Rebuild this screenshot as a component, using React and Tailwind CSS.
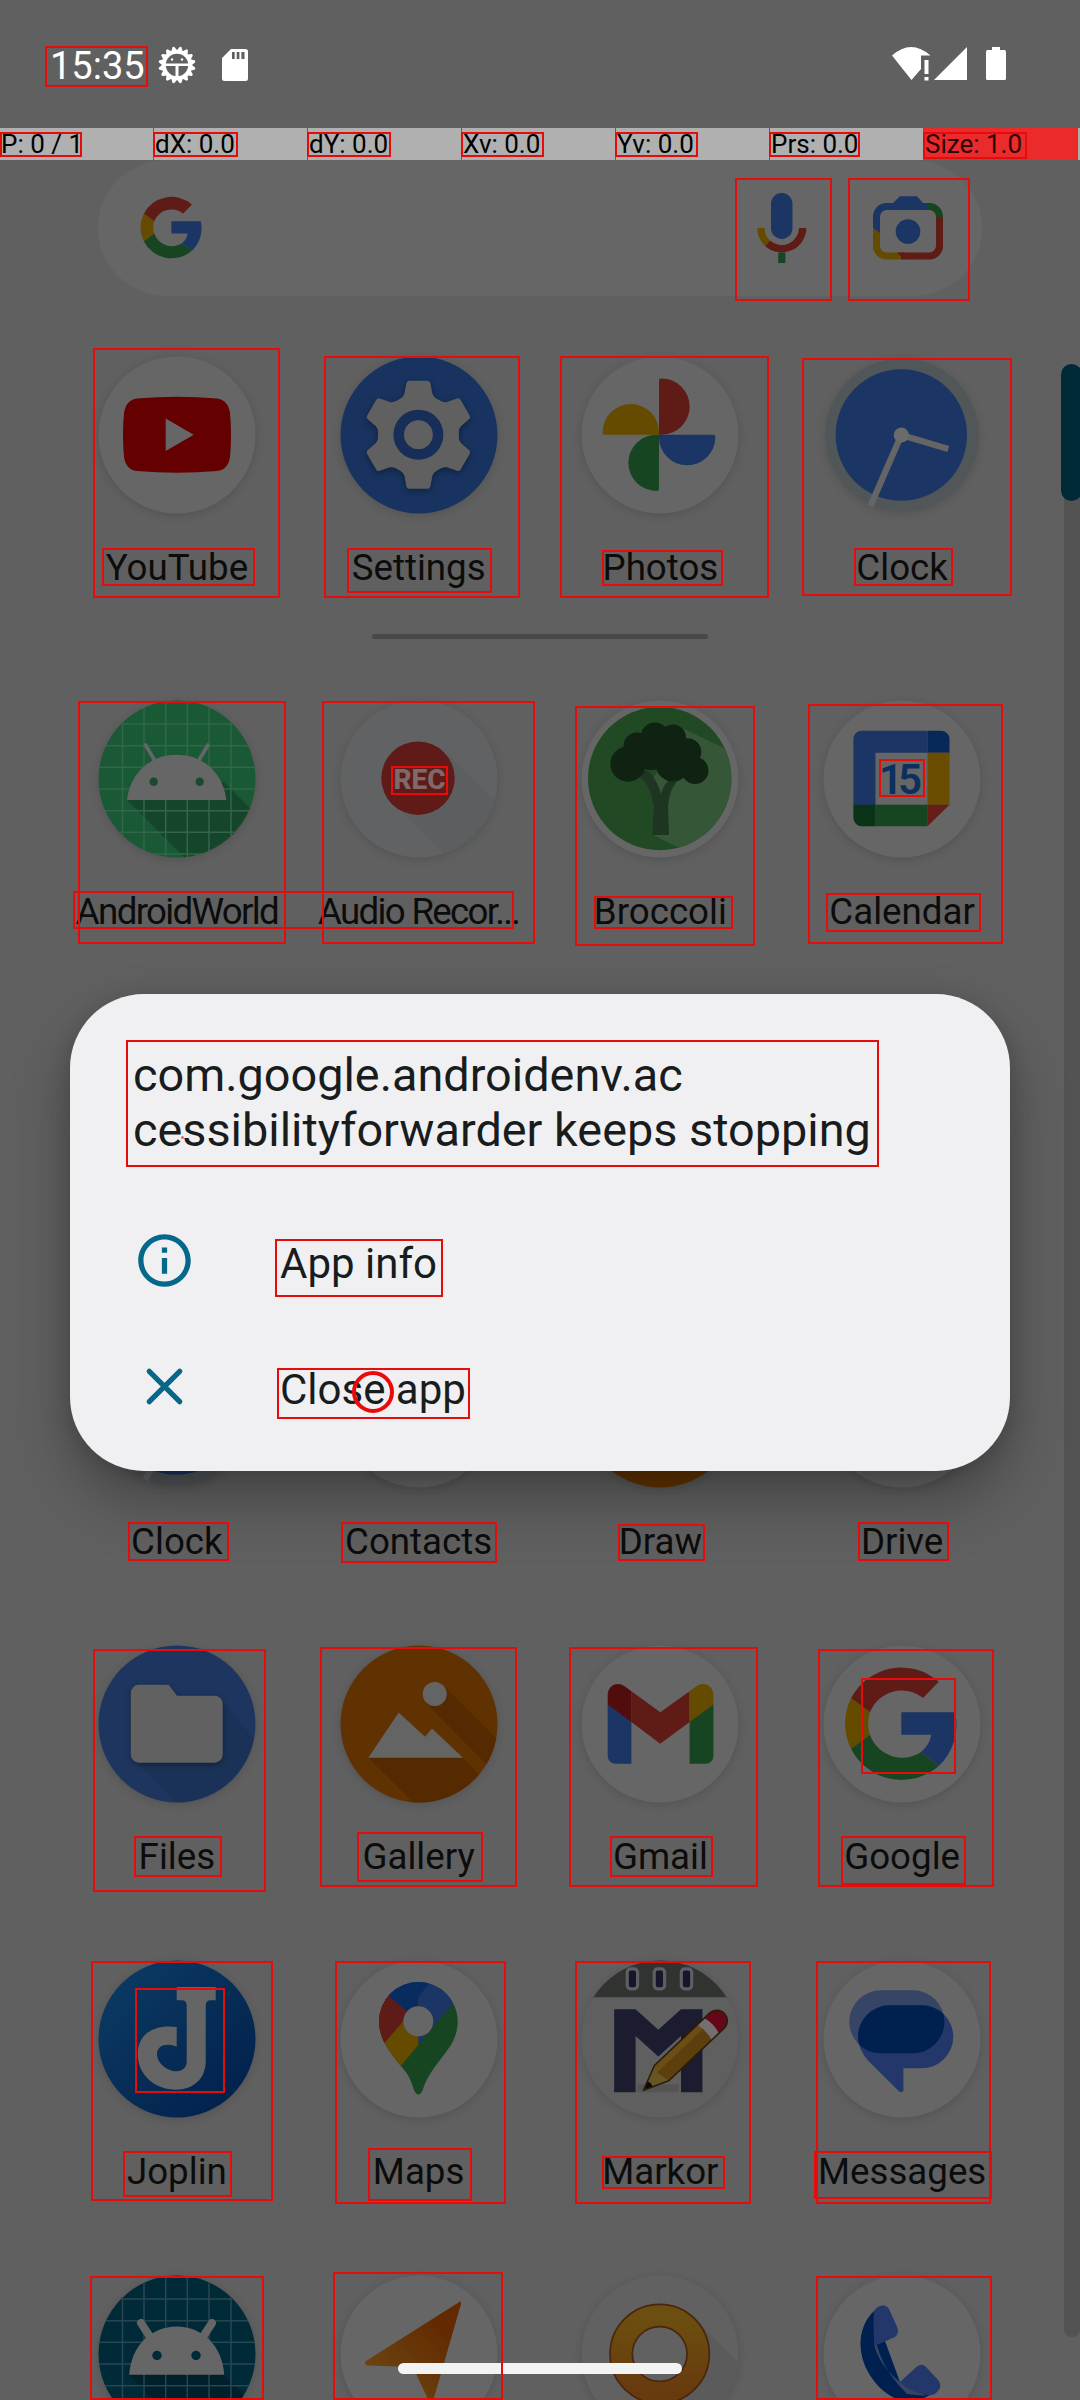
import React from "react";

const RED = "#5f1b16";
const YELLOW = "#654b00";
const GREEN = "#174521";
const BLUE = "#1b3564";
const PAPER = "#666666";

/* ---------- launcher icons (158x158 canvas, origin in the middle) ---------- */

function Disc({ fill = PAPER, r = 78.5, children }) {
  return (
    <svg viewBox="-79 -79 158 158" className="h-[158px] w-[158px] overflow-visible">
      <circle r={r} fill={fill} className="drop-shadow-[0_2px_4px_rgba(0,0,0,0.14)]" />
      {children}
    </svg>
  );
}

function GoogleMark() {
  return (
    <g>
      <path fill={RED} d="M-51-25.7A56.7 56.7 0 0 1 36.8-42.3L21-26A34 34 0 0 0-32-11.7Z" />
      <path fill={YELLOW} d="M-51-25.7L-32-11.7A34 34 0 0 0-32 10.7L-51 24.7A56.7 56.7 0 0 1-51-25.7Z" />
      <path fill={GREEN} d="M-51 24.7L-32 10.7A34 34 0 0 0 19 28L36.8 42A56.7 56.7 0 0 1-51 24.7Z" />
      <path fill={BLUE} d="M-.7-11.7H53A56.7 56.7 0 0 1 36.8 42L19 28A28 28 0 0 0 29.3 10.7H-.7Z" />
    </g>
  );
}

function YouTube() {
  return (
    <Disc>
      <path fill="#640000" d="M-40-36.5Q0-40 40-36.5Q51-35 53-22Q55 0 53 22Q51 35 40 36Q0 39.500-40 36Q-51 35-53 22Q-55 0-53-22Q-51-35-40-36.500Z" />
      <path fill={PAPER} d="M-11.300-16.500L16.700-.3L-11.300 15.900Z" />
    </Disc>
  );
}

function Settings() {
  return (
    <Disc fill="#18335f">
      <g transform="translate(-.6 -.3)">
        <g fill="#606060" className="drop-shadow-[0_2px_3px_rgba(0,0,0,0.35)]">
          <circle r="39.500" />
          {[0, 60, 120, 180, 240, 300].map((a) => (
            <path
              key={a}
              transform={`rotate(${a})`}
              d="M-9-54H9Q11.500-54 12-51.500L14-41Q15-38 18-36L26-31.500L0 0L-26-31.500L-18-36Q-15-38-14-41L-12-51.500Q-11.500-54-9-54Z"
            />
          ))}
        </g>
        <circle r="25" fill="#172e58" />
        <circle r="14.400" fill="#606060" />
      </g>
    </Disc>
  );
}

function Photos() {
  return (
    <Disc>
      <g transform="translate(-1 -.3)">
        {[[RED, 0], [BLUE, 90], [GREEN, 180], [YELLOW, 270]].map(([c, a]) => (
          <path key={a} fill={c} transform={`rotate(${a})`} d="M0 0V-54a2.300 2.300 0 0 1 2.500-2.300A28.150 28.150 0 0 1 2.500 0Z" />
        ))}
      </g>
    </Disc>
  );
}

function Clock() {
  return (
    <Disc fill="#515659" r={76.5}>
      <circle cx="-.7" r="65.700" fill={BLUE} />
      <g stroke="#656565" strokeWidth="6.300">
        <path d="M-.7 0L46.300 13.900M-.7 0L-31.500 71" />
      </g>
      <circle cx="-.7" r="7.600" fill="#6b6b6b" />
    </Disc>
  );
}

function Grid({ stroke }) {
  return (
    <path
      stroke={stroke}
      strokeWidth="1.500"
      d="M-54.500-57V57M-33-71V71M-11.300-78V78M10.300-78V78M32-72V72M54-57V57M-56-55H56M-71-33.300H71M-78-11.700H78M-78 10H78M-72 31.700H72M-57 53.300H57M-24 75H24"
    />
  );
}

function AndroidWorld() {
  return (
    <Disc fill="#1a5936">
      <clipPath id="aw"><circle r="78.500" /></clipPath>
      <path clipPath="url(#aw)" fill="#123a24" opacity=".6" d="M-50 21L10 81H80V36L47 3Z" />
      <Grid stroke="#33664a" />
      <path fill="#666" d="M-50 21C-46.500-8-25-24.300-.3-24.300S46-8 49.300 21Z" />
      <path stroke="#666" strokeWidth="3.600" strokeLinecap="round" d="M-31.500-34L-22-18M31-34L21.500-18" />
      <circle cx="-23.300" cy="2.700" r="4.200" fill="#1a4a30" />
      <circle cx="22.700" cy="2.700" r="4.200" fill="#1a4a30" />
    </Disc>
  );
}

function AudioRecorder() {
  return (
    <Disc fill="#606264">
      <clipPath id="ar"><circle r="78.500" /></clipPath>
      <path clipPath="url(#ar)" fill="#5c5f60" d="M-25 25L30 80H80V26L28-26Z" />
      <circle cx="-1" cy="-.8" r="36.700" fill="#601a17" />
      <text x="0.500" y="10" textAnchor="middle" textLength="52" fill="#7d6a69" className="font-[Roboto] text-[28px] font-extrabold">REC</text>
    </Disc>
  );
}

function Broccoli() {
  return (
    <Disc>
      <clipPath id="br"><circle cx="-.3" cy="-.5" r="71.700" /></clipPath>
      <circle cx="-.3" cy="-.5" r="71.700" fill="#214a24" />
      <path clipPath="url(#br)" fill="#365638" d="M22-51L64-31H80V80H42L-7 56V0Z" />
      <path fill="#1e3521" d="M-24-6L-14-9L-10-6Q-3 1 1 15Q4 5 10 0L21-2Q9 9 8 27L9 56H-7.500L-6.500 27Q-8 10-20-3Z" />
      <g fill="#102312">
        <circle cx="-32" cy="-15" r="17.700" />
        <circle cx="-23" cy="-33" r="13.500" />
        <circle cx="-5" cy="-42.500" r="14" />
        <circle cx="13" cy="-41.500" r="13" />
        <circle cx="27.500" cy="-27" r="13.800" />
        <circle cx="35" cy="-8.500" r="13.500" />
        <circle cx="13" cy="-15" r="17.500" />
        <circle cx="-9" cy="-26" r="17" />
      </g>
    </Disc>
  );
}

function Calendar() {
  return (
    <Disc>
      <path fill={BLUE} d="M-48.600 26V-40a8.500 8.500 0 0 1 8.500-8.300H25.500V-26.300H-26.500V26Z" />
      <path fill="#08285a" d="M25.500-48.300H39a8.500 8.500 0 0 1 8.500 8.300V-26.300H25.500Z" />
      <path fill="#6a4d00" d="M25.500-26.300h22v52h-22Z" />
      <path fill={GREEN} d="M-26.500 25.700h52v21.600h-52Z" />
      <path fill="#0a3216" d="M-48.600 25.700h22.100v21.600H-40a8.500 8.500 0 0 1-8.600-8.300Z" />
      <path fill="#651d18" d="M25.500 25.700h22L25.500 47.300Z" />
      <text x="-1.500" y="14.500" textAnchor="middle" textLength="43" fill="#0e2f5e" className="font-[Roboto] text-[42px] font-semibold">15</text>
    </Disc>
  );
}

function Plain() {
  return <Disc />;
}

function Draw() {
  return <Disc fill="#613300" />;
}

function Files() {
  return (
    <Disc fill="#1e365f">
      <clipPath id="fi"><circle r="78.500" /></clipPath>
      <path clipPath="url(#fi)" fill="#000" opacity=".07" d="M-43 36L2 81H80V18L43-26Z" />
      <path
        fill="#616161"
        className="drop-shadow-[0_2px_3px_rgba(0,0,0,0.35)]"
        d="M-38-39.300H-8.300L0-28.300H37.500a8.200 8.200 0 0 1 8.200 8.200V30.500a8.200 8.200 0 0 1-8.200 8.200H-38a8.200 8.200 0 0 1-8.200-8.200V-31a8.200 8.200 0 0 1 8.200-8.300Z"
      />
    </Disc>
  );
}

function Gallery() {
  return (
    <Disc fill="#603101">
      <clipPath id="ga"><circle r="78.500" /></clipPath>
      <g clipPath="url(#ga)" fill="#552a00">
        <path d="M-50.700 33.700L-4 80H80V70L44 33.700ZM25-38L80 17V47H74L7-21Z" />
      </g>
      <circle cx="15.700" cy="-30" r="12" fill="#646464" />
      <path fill="#646464" d="M-50.700 33.700L-20.300-11.500L6 12.700L13 4.500L44 33.700Z" />
    </Disc>
  );
}

function Gmail() {
  return (
    <Disc>
      <path fill={BLUE} d="M-52.300-20L-28.600-3V39.700H-44.500a7.800 7.800 0 0 1-7.800-7.800Z" />
      <path fill={GREEN} d="M53.400-20L29.600-3V39.700H45.600a7.800 7.800 0 0 0 7.800-7.800Z" />
      <path fill={RED} d="M-28.600-32.700L.3-11.700L29.600-32.700V-2L.3 19.700L-28.600-2Z" />
      <path fill="#500d0c" d="M-52.300-19.500V-29C-52.300-38-43-43.500-35-37.500L-28.600-32.700V-2Z" />
      <path fill={YELLOW} d="M53.400-19.500V-29C53.400-38 44-43.500 36-37.500L29.600-32.700V-2Z" />
    </Disc>
  );
}

function Google() {
  return (
    <Disc>
      <GoogleMark />
    </Disc>
  );
}

function Joplin() {
  return (
    <Disc fill="url(#jo)">
      <defs>
        <linearGradient id="jo" x1="0" y1="0" x2="1" y2="1">
          <stop offset=".1" stopColor="#0b3a62" />
          <stop offset=".9" stopColor="#02214c" />
        </linearGradient>
      </defs>
      <path
        fill="#656565"
        d="M-.3-52H38.700V-38.700H34q-5.300 0-5.300 5.300V22C28.700 40 16 50.700-1 50.700C-22 50.700-39.300 36-39.300 15C-39.300-5-23-15-.3-12V7.700C-10 3.500-20 6-20 15C-20 24-10 32.300-.5 32.300C6 32.300 9.700 28 9.700 22V-33.400q0-5.300-5.300-5.300H-.3Z"
      />
    </Disc>
  );
}

function Maps() {
  return (
    <Disc>
      <clipPath id="ma">
        <path d="M-40-17.700A39.350 39.350 0 0 1 38.700-17.700C38.700-2 31 8 24 17C14 30 8 38 3.700 51Q-.7 60-5 51C-9 38-12 34-18 27C-30 12-40 0-40-17.700Z" />
      </clipPath>
      <g clipPath="url(#ma)">
        <path fill={GREEN} d="M-60-60H60V60H-60Z" />
        <path fill={BLUE} d="M-60-60H55L-.7 5Z" />
        <path fill={YELLOW} d="M-36 .3L-.7-40V6L-17.300 26L-30 40L-60 28Z" />
        <path fill={RED} d="M-60-68L-9-25.500L-38 8H-60Z" />
        <path fill="#0a2b60" d="M-60-68L-12.700-28.300L-.7-18L-.7-42L10.300-55.700V-70H-38Z" />
      </g>
      <circle cx="-.7" cy="-17.700" r="15" fill={PAPER} />
    </Disc>
  );
}

function Markor() {
  return (
    <Disc fill="#5f5f5f">
      <path fill="#303330" d="M-66.500-41.700A78.500 78.500 0 0 1 66.500-41.700Z" />
      {[-27.6, -0.6, 26.5].map((x) => (
        <rect key={x} x={x - 5.2} y="-70.200" width="10.400" height="20" rx="3.500" fill="#15162a" stroke="#5e5e63" strokeWidth="3.200" />
      ))}
      <path fill="#545454" d="M-22.500 45.300H18.600V53.300H-22.500Z" />
      <path fill="#1b1c2f" d="M-45.800-29.700H-24.400L-1.700-9.300L21-29.700H42.400V53.300H21V-3L-1.700 17.500L-24.400-3V53.300H-45.800Z" />
      <g transform="translate(-16.500 51.300) rotate(-43.500)">
        <path fill="#685524" d="M0 0L25-10.500V10.500Z" />
        <path fill="#6d4d16" d="M25-10.500H88V-3H22Z" />
        <path fill="#5c3f0c" d="M22-3.500H88V10.500H25Z" />
        <path fill="#747071" d="M84-10.500H94Q97 0 94 10.500H84Q87 0 84-10.500Z" />
        <path fill="#650719" d="M94-10.500H101A10.500 10.500 0 0 1 101 10.500H94Q97 0 94-10.500Z" />
        <path fill="#0b0905" d="M0 0L9-4Q11 0 9 4Z" />
        <path fill="none" stroke="#2b1c08" strokeWidth="1.600" strokeLinejoin="round" d="M0 0L25-10.500H101A10.500 10.500 0 0 1 101 10.500H25Z" />
      </g>
    </Disc>
  );
}

function Messages() {
  const back = "M-21.200-48.700H10.900a31.500 31.500 0 0 1 0 63H-21.200a31.500 31.500 0 0 1 0-63Z";
  const front = "M-12.500-33.700H19.800a31.500 31.500 0 0 1 0 63H1.400V51.500Q.5 54-2.800 52.500L-34 21.500Q-44 10-44-2.200A31.500 31.500 0 0 1-12.500-33.700Z";
  return (
    <Disc>
      <clipPath id="me"><path d={back} /></clipPath>
      <path fill="#364466" d={back} />
      <path fill="#23376a" d={front} />
      <path fill="#00204f" clipPath="url(#me)" d={front} />
    </Disc>
  );
}

function AndroidBlue() {
  return (
    <Disc fill="#002a38">
      <clipPath id="ab"><circle r="78.500" /></clipPath>
      <path clipPath="url(#ab)" fill="#001c27" d="M-48 20.800L10 80H80V54L47 20.800Z" opacity=".7" />
      <Grid stroke="#284650" />
      <path fill="#666" d="M-47.800 20.800C-46-8-26-27.500-.3-27.500S45.500-8 47.200 20.800Z" />
      <path stroke="#666" strokeWidth="8" strokeLinecap="round" d="M-36-31L-23-11M35-31L22-11" />
      <circle cx="-20" cy="1.500" r="4.700" fill="#002a38" />
      <circle cx="19" cy="1.500" r="4.700" fill="#002a38" />
    </Disc>
  );
}

function Arrow() {
  return (
    <Disc>
      <defs>
        <linearGradient id="na" x1="0" y1="1" x2="1" y2="0">
          <stop offset=".2" stopColor="#6b4310" />
          <stop offset=".8" stopColor="#632900" />
        </linearGradient>
      </defs>
      <path fill="url(#na)" d="M39.500-51.500Q42-54 42-50L14.500 45.500Q12 50 9 45.500L-6 13L-51.500 11.500Q-56 10-53 7Z" />
    </Disc>
  );
}

function Ring() {
  return (
    <Disc fill="#616161">
      <clipPath id="ri"><circle r="78.500" /></clipPath>
      <path clipPath="url(#ri)" fill="#5b5b5b" d="M35-35L80 10V80H30L-35 35Z" />
      <defs>
        <linearGradient id="rg" x1="0" y1="0" x2="0" y2="1">
          <stop offset="0" stopColor="#6c4f10" />
          <stop offset="1" stopColor="#683a0e" />
        </linearGradient>
      </defs>
      <circle r="27.500" fill="#616161" />
      <circle cx="-.3" r="38.500" fill="none" stroke="#4a260c" strokeWidth="24" />
      <circle cx="-.3" r="38.500" fill="none" stroke="url(#rg)" strokeWidth="20.500" />
    </Disc>
  );
}

function Phone() {
  return (
    <Disc>
      <path fill="#00204f" d="M-28-43C-46-26-46 4-28 27C-14 45 4 51 20 45L30 40L-2 28Z" />
      <path fill="#364466" d="M-28-43Q-32 4 5 40L24 42L-2 28Q-22 12-27.600-8Z" />
      <path fill="#23376a" d="M-28-43Q-24-49-18-48.500Q-14-48-12.500-44L-4.500-26Q-3-20-7-17L-27.600-8Q-29-26-28-43Z" />
      <path fill="#23376a" d="M-2 28L15 12.500Q20 9 24 13L37 27Q40 33 36 37Q33 41 27 41.500Q11 40-2 28Z" />
    </Disc>
  );
}

/* ---------- launcher ---------- */

const LABEL = "mt-[32px] h-[43px] font-[Roboto] text-[36.7px] leading-[43px] whitespace-nowrap text-[#0c0c0c]";

function LauncherApp({ icon: Icon, name, tight }) {
  return (
    <div className="flex h-[315px] flex-col items-center">
      <Icon />
      <span className={tight ? `${LABEL} tracking-[-1.7px]` : LABEL}>{name}</span>
    </div>
  );
}

function AppGrid({ apps, className }) {
  return (
    <div className={`ml-[56px] grid w-[967px] grid-cols-4 ${className}`}>
      {apps.map((a, i) => (
        <LauncherApp key={i} {...a} />
      ))}
    </div>
  );
}

const FAVORITES = [
  { icon: YouTube, name: "YouTube" },
  { icon: Settings, name: "Settings" },
  { icon: Photos, name: "Photos" },
  { icon: Clock, name: "Clock" },
];

const TOP_APPS = [
  { icon: AndroidWorld, name: "AndroidWorld", tight: true },
  { icon: AudioRecorder, name: "Audio Recor...", tight: true },
  { icon: Broccoli, name: "Broccoli" },
  { icon: Calendar, name: "Calendar" },
];

const MORE_APPS = [
  { icon: Clock, name: "Clock" },
  { icon: Plain, name: "Contacts" },
  { icon: Draw, name: "Draw" },
  { icon: Plain, name: "Drive" },
  { icon: Files, name: "Files" },
  { icon: Gallery, name: "Gallery" },
  { icon: Gmail, name: "Gmail" },
  { icon: Google, name: "Google" },
  { icon: Joplin, name: "Joplin" },
  { icon: Maps, name: "Maps" },
  { icon: Markor, name: "Markor" },
  { icon: Messages, name: "Messages" },
  { icon: AndroidBlue, name: "" },
  { icon: Arrow, name: "" },
  { icon: Ring, name: "" },
  { icon: Phone, name: "" },
];

/* ---------- system chrome ---------- */

function StatusBar() {
  return (
    <div className="flex h-[128px] shrink-0 items-start text-white">
      <span className="mt-[43px] ml-[50px] w-[108px] font-[Roboto] text-[38px] leading-[46px]">15:35</span>
      <svg viewBox="-19 -19 38 38" className="mt-[46px] h-[38px] w-[38px]">
        {Array.from({ length: 16 }, (_, i) => (
          <path key={i} transform={`rotate(${i * 22.5 + 11.25})`} fill="#fff" d="M-3.300-14L-.8-18.500H.8L3.300-14Z" />
        ))}
        <circle r="13" fill="none" stroke="#fff" strokeWidth="3.600" />
        <path fill="#fff" d="M-13-1.500H13V1H1.500V14H-1.500V1H-13Z" />
        <circle cx="-5" cy="-5.500" r="1.200" fill="#fff" />
        <circle cx="5" cy="-5.500" r="1.200" fill="#fff" />
      </svg>
      <svg viewBox="0 0 26 32" className="mt-[49px] ml-[26px] h-[32px] w-[26px]">
        <path fill="#fff" fillRule="evenodd" d="M9 0H23.500Q26 0 26 2.500V29.500Q26 32 23.500 32H2.500Q0 32 0 29.500V9ZM10 3V10H12.700V3ZM14.700 3V10H17.400V3ZM19.400 3V10H22.500V3Z" />
      </svg>
      <svg viewBox="0 0 76 34" className="mt-[47px] ml-[644px] h-[34px] w-[76px]">
        <path fill="#fff" d="M0 8.500Q19-8.500 38.500 8.500H29V22L19.500 33Z" />
        <path fill="#fff" d="M32.500 13H36.500V27H32.500ZM32.500 30H36.500V33.500H32.500Z" />
        <path fill="#fff" d="M42 33L75 0V33Z" />
      </svg>
      <svg viewBox="0 0 20 34" className="mt-[47px] ml-[18px] h-[34px] w-[20px]">
        <path fill="#fff" d="M6 0H14V3H18.500Q20 3 20 5V31.500Q20 33 18.500 33H1.500Q0 33 0 31.500V5Q0 3 1.500 3H6Z" />
      </svg>
    </div>
  );
}

function PointerBar() {
  const cells = ["P: 0 / 1", "dX: 0.0", "dY: 0.0", "Xv: 0.0", "Yv: 0.0", "Prs: 0.0"];
  const text = "h-[32px] w-[153px] shrink-0 pl-px font-[Roboto] text-[26px] leading-[33px] whitespace-pre";
  return (
    <div className="flex h-[32px] shrink-0 gap-px overflow-hidden">
      {cells.map((c) => (
        <span key={c} className={`${text} bg-[#b0b0b0] text-black`}>{c}</span>
      ))}
      <span className={`${text} bg-[#eb2b2b] text-[#2a0505]`}>Size: 1.0</span>
      <span className="h-[32px] flex-1 bg-[#b0b0b0]" />
    </div>
  );
}

function SearchBar() {
  return (
    <div className="ml-[98px] flex h-[136px] w-[884px] shrink-0 items-center rounded-full bg-[#666666]">
      <svg viewBox="-58 -58 116 116" className="ml-[42px] h-[63.500px] w-[63.500px]">
        <GoogleMark />
      </svg>
      <svg viewBox="0 0 50 72" className="ml-[553.500px] h-[72px] w-[50px]">
        <rect x="14" y="1" width="21.500" height="46" rx="10.700" fill={BLUE} />
        <path fill="none" stroke={RED} strokeWidth="7.300" d="M45.700 36A21 21 0 0 1 10.500 51.200" />
        <path fill="none" stroke={YELLOW} strokeWidth="7.300" d="M3.900 36A21 21 0 0 0 10.500 51.200" />
        <path fill={GREEN} d="M21.200 60.500h7.200V71h-7.200Z" />
      </svg>
      <svg viewBox="0 0 70 64" className="ml-[66px] h-[64px] w-[70px]">
        <g fill="none" strokeWidth="7">
          <path stroke={BLUE} d="M3.500 34V20.500a10 10 0 0 1 10-10H55" />
          <path stroke={GREEN} d="M54 10.500H56.500a10 10 0 0 1 10 10V24" />
          <path stroke={RED} d="M66.500 22V50a10 10 0 0 1-10 10H28" />
          <path stroke={YELLOW} d="M28 60H13.500a10 10 0 0 1-10-10V30" />
        </g>
        <path fill={BLUE} d="M19 8L27 .3H44L56 14H19ZM0 25H7V37L0 32Z" />
        <path fill={RED} d="M63 20L70 27H63ZM24 56.500H32V63.500H31Z" />
        <circle cx="35" cy="35.500" r="12.300" fill={BLUE} />
      </svg>
    </div>
  );
}

function CrashDialog() {
  return (
    <div className="absolute top-[994px] left-[70px] flex h-[477px] w-[940px] flex-col rounded-[74px] bg-[#f0f0f2] px-[63px] pt-[54px] font-[Roboto] text-[#191c1d] shadow-[0_30px_60px_rgba(0,0,0,0.28),0_4px_20px_rgba(0,0,0,0.15)]">
      <h1 className="text-[46.800px] leading-[54.700px] whitespace-nowrap">
        com.google.androidenv.ac
        <br />
        cessibilityforwarder keeps stopping
      </h1>
      <div className="mt-[41px] flex h-[126px] items-center">
        <svg viewBox="0 0 24 24" className="h-[63px] w-[63px] -translate-y-px">
          <path fill="#05678a" d="M11 7h2v2h-2zm0 4h2v6h-2zm1-9C6.480 2 2 6.480 2 12s4.480 10 10 10 10-4.480 10-10S17.520 2 12 2zm0 18c-4.410 0-8-3.590-8-8s3.590-8 8-8 8 3.590 8 8-3.590 8-8 8z" />
        </svg>
        <span className="mt-[5px] ml-[84px] text-[42px] leading-[50px]">App info</span>
      </div>
      <div className="flex h-[126px] items-center">
        <svg viewBox="0 0 24 24" className="h-[63px] w-[63px] -translate-y-px">
          <path fill="none" stroke="#05678a" strokeWidth="2" strokeLinecap="round" d="M6.200 6.200L17.800 17.800M17.800 6.200L6.200 17.800" />
        </svg>
        <span className="mt-[5px] ml-[84px] text-[42px] leading-[50px]">Close app</span>
      </div>
    </div>
  );
}

/* Bounding boxes of the detected elements: left, top, right, bottom. */
const BOXES = [
  [45, 46, 148, 87], [0, 132, 82, 157], [153, 132, 238, 157], [307, 132, 391, 157],
  [461, 132, 544, 157], [615, 132, 698, 157], [769, 132, 860, 157], [923, 132, 1027, 159],
  [735, 178, 832, 301], [848, 178, 970, 301],
  [93, 348, 280, 598], [102, 548, 255, 586], [324, 356, 520, 598], [347, 548, 492, 593],
  [560, 356, 769, 598], [602, 550, 723, 586], [802, 358, 1012, 596], [854, 548, 953, 586],
  [78, 701, 286, 944], [73, 891, 514, 929], [322, 701, 535, 944], [391, 766, 448, 795],
  [575, 706, 755, 946], [594, 896, 733, 929], [808, 704, 1003, 944], [879, 759, 925, 797], [826, 893, 981, 932],
  [126, 1040, 879, 1167], [275, 1239, 443, 1297], [277, 1368, 470, 1419],
  [128, 1522, 229, 1561], [341, 1522, 497, 1563], [618, 1524, 705, 1561], [858, 1522, 949, 1561],
  [93, 1649, 266, 1892], [134, 1836, 222, 1877], [320, 1647, 517, 1887], [357, 1832, 483, 1882],
  [569, 1647, 758, 1887], [610, 1836, 713, 1877], [818, 1649, 994, 1887], [841, 1836, 966, 1885], [861, 1678, 956, 1774],
  [91, 1961, 273, 2201], [123, 2151, 232, 2197], [135, 1988, 225, 2093],
  [335, 1961, 506, 2204], [368, 2148, 472, 2201], [575, 1961, 751, 2204], [602, 2156, 725, 2189],
  [816, 1961, 991, 2204], [814, 2151, 992, 2199],
  [90, 2276, 264, 2400], [333, 2272, 503, 2400], [816, 2276, 992, 2400],
];

function Annotations() {
  return (
    <div className="pointer-events-none absolute inset-0">
      {BOXES.map(([l, t, r, b]) => (
        <div
          key={`${l}-${t}-${r}`}
          className="absolute border-2 border-[#e60c0c]"
          style={{ left: l, top: t, width: r - l, height: b - t }}
        />
      ))}
      <div className="absolute top-[1136px] left-[181px] h-[3px] w-[3px] rounded-full bg-[#dd6a70]" />
      <div className="absolute top-[1371px] left-[352px] h-[42px] w-[42px] rounded-full border-4 border-[#ea0a0a]" />
    </div>
  );
}

export default function App() {
  return (
    <div className="relative flex h-[2400px] w-[1080px] flex-col overflow-hidden bg-[#606060]">
      <StatusBar />
      <PointerBar />
      <SearchBar />
      <AppGrid apps={FAVORITES} className="mt-[60px] h-[278px] shrink-0" />
      <div className="ml-[372px] h-[5px] w-[336px] shrink-0 rounded-full bg-[#484848]" />
      <AppGrid apps={TOP_APPS} className="mt-[61px] h-[630px] shrink-0 content-start" />
      <AppGrid apps={MORE_APPS} className="shrink-0" />

      <div className="absolute top-[380px] left-[1064px] h-[1957px] w-[16px] rounded-b-full bg-[#535353]" />
      <div className="absolute top-[364px] left-[1061px] h-[137px] w-[21px] rounded-full bg-[#002a38]" />

      <CrashDialog />
      <div className="absolute top-[2363px] left-[398px] h-[11px] w-[284px] rounded-full bg-[#f3f3f3]" />
      <Annotations />
    </div>
  );
}
